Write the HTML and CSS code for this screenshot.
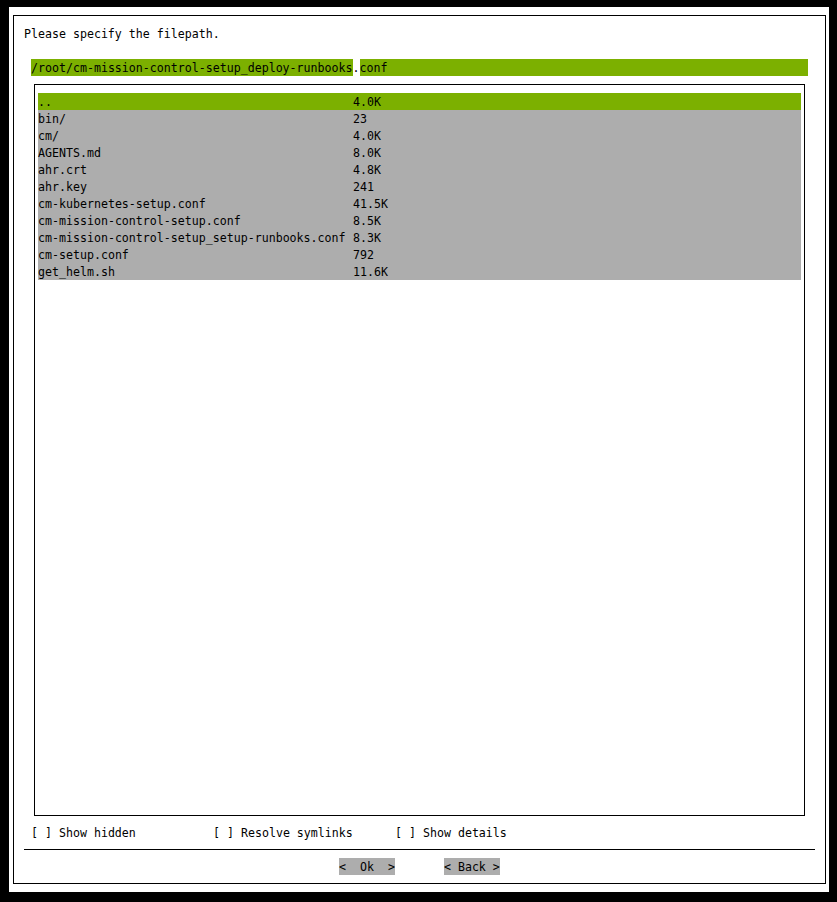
FILE: index.html
```html
<!DOCTYPE html>
<html lang="en">
<head>
<meta charset="utf-8">
<title>Select file</title>
<link rel="stylesheet" href="styles.css">
</head>
<body>
<div class="screen">
  <div class="frame">
    <div class="line">Please specify the filepath.</div>
    <div class="line"></div>
    <div class="path-input"><span>/root/cm-mission-control-setup_deploy-runbooks</span><span class="cursor">.</span><span>conf</span></div>
    <div class="listbox">
      <div class="entry selected"><span class="name">..</span><span class="size">4.0K</span></div>
      <div class="entry"><span class="name">bin/</span><span class="size">23</span></div>
      <div class="entry"><span class="name">cm/</span><span class="size">4.0K</span></div>
      <div class="entry"><span class="name">AGENTS.md</span><span class="size">8.0K</span></div>
      <div class="entry"><span class="name">ahr.crt</span><span class="size">4.8K</span></div>
      <div class="entry"><span class="name">ahr.key</span><span class="size">241</span></div>
      <div class="entry"><span class="name">cm-kubernetes-setup.conf</span><span class="size">41.5K</span></div>
      <div class="entry"><span class="name">cm-mission-control-setup.conf</span><span class="size">8.5K</span></div>
      <div class="entry"><span class="name">cm-mission-control-setup_setup-runbooks.conf</span><span class="size">8.3K</span></div>
      <div class="entry"><span class="name">cm-setup.conf</span><span class="size">792</span></div>
      <div class="entry"><span class="name">get_helm.sh</span><span class="size">11.6K</span></div>
    </div>
    <div class="options">
      <span class="option">[ ] Show hidden</span>
      <span class="option">[ ] Resolve symlinks</span>
      <span class="option">[ ] Show details</span>
    </div>
    <div class="divider"></div>
    <div class="buttons">
      <span class="button">&lt;  Ok  &gt;</span>
      <span class="button">&lt; Back &gt;</span>
    </div>
  </div>
</div>
</body>
</html>
```
FILE: styles.css
```css
/* Terminal dialog: 7px x 17px character cells */
html, body {
  margin: 0;
  background: #000;
}

body {
  padding: 7px 8px 10px 9px;
  font-family: "DejaVu Sans Mono", "Liberation Mono", monospace;
  font-size: 11.627px;
  line-height: 17px;
  color: #000;
}

.screen {
  width: 820px;
  height: 885px;
  background: #fff;
  padding: 8px 0 0 4px;
  box-sizing: border-box;
}

.frame {
  width: 813px;
  height: 869px;
  border: 1px solid #000;
  box-sizing: border-box;
  padding: 9px 0 0 10px;
}

/* one text cell row; glyphs sit 1px below the cell's midline */
.line,
.entry,
.options,
.button,
.path-input span {
  height: 17px;
  padding-top: 1px;
  box-sizing: border-box;
  white-space: pre;
}

.path-input {
  margin-left: 7px;
  width: 777px;
  height: 17px;
  background: #7cb000;
  display: flex;
}

.cursor {
  background: #fff;
}

.listbox {
  margin: 8px 0 8px 10px;
  width: 771px;
  height: 732px;
  border: 1px solid #000;
  box-sizing: border-box;
  padding: 8px 0 0 3px;
}

.entry {
  display: flex;
  width: 763px;
  background: #adadad;
}

.entry.selected {
  background: #7cb000;
}

.entry .name {
  width: 315px;
  flex: none;
}

.options {
  display: grid;
  grid-template-columns: 182px 182px 182px;
  margin-left: 7px;
}

.divider {
  height: 17px;
  width: 791px;
  position: relative;
}

.divider::before {
  content: "";
  position: absolute;
  left: 0;
  right: 0;
  top: 8px;
  height: 1px;
  background: #000;
}

.buttons {
  display: flex;
  gap: 49px;
  padding-left: 315px;
  height: 17px;
}

.button {
  display: block;
  background: #adadad;
}
```
